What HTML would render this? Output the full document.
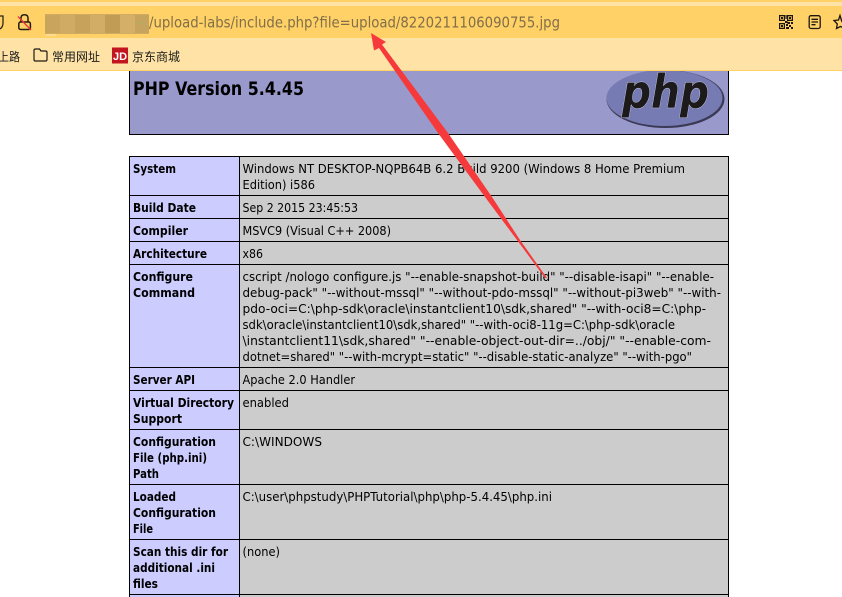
<!DOCTYPE html>
<html>
<head>
<meta charset="utf-8">
<style>
html,body{margin:0;padding:0;background:#fff;width:842px;height:597px;overflow:hidden}
svg{display:block}
.r{font-family:"DejaVu Sans","Liberation Sans",sans-serif;font-size:12px;fill:#000}
.b{font-family:"DejaVu Sans","Liberation Sans",sans-serif;font-size:12px;font-weight:bold;fill:#000}
.c{font-family:"Liberation Sans","Noto Sans CJK SC",sans-serif;font-size:12px;fill:#1a1a1a}
</style>
</head>
<body>
<svg width="842" height="597" viewBox="0 0 842 597" xmlns="http://www.w3.org/2000/svg">
<rect width="842" height="597" fill="#fff"/>
<!-- browser chrome -->
<rect width="842" height="71" fill="#ffd166"/>
<rect y="2" width="842" height="4" fill="#ffe3a6"/>
<rect y="38" width="842" height="32" fill="#ffe3a6"/>
<!-- blurred host -->
<g>
<rect x="45" y="14" width="104" height="20" fill="#d2ab62"/>
<rect x="45" y="15" width="15" height="18" fill="#c8a45c"/>
<rect x="60" y="15" width="15" height="18" fill="#cfab63"/>
<rect x="75" y="15" width="15" height="18" fill="#c6a25b"/>
<rect x="90" y="15" width="15" height="18" fill="#d1ad66"/>
<rect x="105" y="15" width="15" height="18" fill="#c19c55"/>
<rect x="120" y="15" width="15" height="18" fill="#d3af68"/>
<rect x="135" y="15" width="14" height="18" fill="#c6a45e"/>
<rect x="139" y="22" width="2" height="2" fill="#9db36a"/>
<rect x="46" y="34" width="10" height="2" fill="#ffdd8e"/>
</g>
<!-- left partial shield -->
<path d="M-2 16 H3 V23 Q3 27 0 29" fill="none" stroke="#2a2418" stroke-width="1.3"/>
<!-- lock icon -->
<g fill="none" stroke="#231c10" stroke-width="1.5">
<path d="M21 22 V18 Q21 14.8 24.500 14.800 Q28 14.800 28 18 V22"/>
<rect x="18.800" y="22" width="11.600" height="7.500" rx="1.800"/>
</g>
<path d="M18 16.500 L31 30" stroke="#f0353b" stroke-width="1.400" fill="none"/>
<text x="149" y="27.500" font-family="'DejaVu Sans','Liberation Sans',sans-serif" font-size="15" fill="#806f49" textLength="411" lengthAdjust="spacingAndGlyphs">/upload-labs/include.php?file=upload/8220211106090755.jpg</text>
<!-- right icons -->
<g fill="#1c1710">
<path fill-rule="evenodd" d="M779 15h6v6h-6zM780.200 16.200v3.600h3.600v-3.600zM787 15h6v6h-6zM788.200 16.200v3.600h3.600v-3.600zM779 23h6v6h-6zM780.200 24.200v3.600h3.600v-3.600z"/>
<rect x="781" y="17" width="2" height="2"/><rect x="789" y="17" width="2" height="2"/><rect x="781" y="25" width="2" height="2"/>
<rect x="785.500" y="15" width="1.200" height="4"/><rect x="785" y="21" width="2.500" height="2"/><rect x="787.500" y="22" width="2.500" height="2"/><rect x="791" y="22" width="2" height="2"/><rect x="786" y="24" width="2" height="2"/><rect x="789" y="25" width="2" height="2"/><rect x="791" y="27" width="2" height="2"/><rect x="786" y="27" width="3" height="2"/>
</g>
<g fill="none" stroke="#1c1710" stroke-width="1.300">
<rect x="809.200" y="15.700" width="11" height="12.800" rx="1.800"/>
<path d="M811.500 19.300h6.500M811.500 22h6.500M811.500 24.700h4"/>
<path d="M842 22 L840 15.500 L838.500 20 L834 20.500 L837.300 24 L836.500 28.500 L840.500 26.500 L844 28"/>
</g>
<!-- bookmarks -->
<text class="c" x="-2" y="61" textLength="22" lengthAdjust="spacingAndGlyphs">上路</text>
<path d="M34 50.500 Q34 49 35.500 49 H39.500 L41 51 H45.500 Q47 51 47 52.500 V59.500 Q47 61 45.500 61 H35.500 Q34 61 34 59.500 Z" fill="none" stroke="#1e1a12" stroke-width="1.200"/>
<text class="c" x="52" y="61" textLength="48" lengthAdjust="spacingAndGlyphs">常用网址</text>
<rect x="112" y="47.500" width="16" height="16" fill="#c2151f"/>
<text x="120" y="60" text-anchor="middle" font-family="'Liberation Sans',sans-serif" font-size="11" font-weight="bold" fill="#fff">JD</text>
<text class="c" x="132" y="61" textLength="48" lengthAdjust="spacingAndGlyphs">京东商城</text>
<rect y="70" width="842" height="1" fill="#ffd166"/>
<!-- PHP header -->
<rect x="129" y="71" width="600" height="64" fill="#000"/>
<rect x="130" y="71" width="598" height="63" fill="#9999cc"/>
<text x="133" y="95" font-family="'DejaVu Sans','Liberation Sans',sans-serif" font-size="19" font-weight="bold" fill="#000" textLength="171" lengthAdjust="spacingAndGlyphs">PHP Version 5.4.45</text>
<!-- logo -->
<svg x="600" y="71" width="128" height="63" viewBox="600 71 128 63">
<ellipse cx="665.500" cy="99" rx="59" ry="29" fill="#3a3a55"/>
<ellipse cx="664.500" cy="98" rx="58" ry="28" fill="#777bb4"/>
<text x="622" y="108" font-family="'DejaVu Sans',sans-serif" font-size="46" font-weight="bold" font-style="italic" fill="#1d1a1c" stroke="#d6d8ea" stroke-width="0.800" paint-order="stroke" textLength="87" lengthAdjust="spacingAndGlyphs">php</text>
</svg>
<!-- table -->
<rect x="129" y="156" width="600" height="441" fill="#000"/>
<g fill="#ccccff">
<rect x="130" y="157" width="109" height="38"/>
<rect x="130" y="196" width="109" height="22"/>
<rect x="130" y="219" width="109" height="22"/>
<rect x="130" y="242" width="109" height="22"/>
<rect x="130" y="265" width="109" height="102"/>
<rect x="130" y="368" width="109" height="22"/>
<rect x="130" y="391" width="109" height="38"/>
<rect x="130" y="430" width="109" height="54"/>
<rect x="130" y="485" width="109" height="54"/>
<rect x="130" y="540" width="109" height="54"/>
<rect x="130" y="595" width="109" height="2"/>
</g>
<g fill="#cccccc">
<rect x="240" y="157" width="488" height="38"/>
<rect x="240" y="196" width="488" height="22"/>
<rect x="240" y="219" width="488" height="22"/>
<rect x="240" y="242" width="488" height="22"/>
<rect x="240" y="265" width="488" height="102"/>
<rect x="240" y="368" width="488" height="22"/>
<rect x="240" y="391" width="488" height="38"/>
<rect x="240" y="430" width="488" height="54"/>
<rect x="240" y="485" width="488" height="54"/>
<rect x="240" y="540" width="488" height="54"/>
<rect x="240" y="595" width="488" height="2"/>
</g>
<!-- labels -->
<text class="b" x="133" y="173" textLength="43" lengthAdjust="spacingAndGlyphs">System</text>
<text class="b" x="133" y="212" textLength="63" lengthAdjust="spacingAndGlyphs">Build Date</text>
<text class="b" x="133" y="235" textLength="55" lengthAdjust="spacingAndGlyphs">Compiler</text>
<text class="b" x="133" y="258" textLength="74" lengthAdjust="spacingAndGlyphs">Architecture</text>
<text class="b" x="133" y="281" textLength="60" lengthAdjust="spacingAndGlyphs">Configure</text>
<text class="b" x="133" y="297" textLength="62" lengthAdjust="spacingAndGlyphs">Command</text>
<text class="b" x="133" y="384" textLength="62" lengthAdjust="spacingAndGlyphs">Server API</text>
<text class="b" x="133" y="407" textLength="101" lengthAdjust="spacingAndGlyphs">Virtual Directory</text>
<text class="b" x="133" y="423" textLength="49" lengthAdjust="spacingAndGlyphs">Support</text>
<text class="b" x="133" y="446" textLength="83" lengthAdjust="spacingAndGlyphs">Configuration</text>
<text class="b" x="133" y="462" textLength="74" lengthAdjust="spacingAndGlyphs">File (php.ini)</text>
<text class="b" x="133" y="478" textLength="26" lengthAdjust="spacingAndGlyphs">Path</text>
<text class="b" x="133" y="501" textLength="43" lengthAdjust="spacingAndGlyphs">Loaded</text>
<text class="b" x="133" y="517" textLength="83" lengthAdjust="spacingAndGlyphs">Configuration</text>
<text class="b" x="133" y="533" textLength="20" lengthAdjust="spacingAndGlyphs">File</text>
<text class="b" x="133" y="556" textLength="95" lengthAdjust="spacingAndGlyphs">Scan this dir for</text>
<text class="b" x="133" y="572" textLength="82" lengthAdjust="spacingAndGlyphs">additional .ini</text>
<text class="b" x="133" y="588" textLength="25" lengthAdjust="spacingAndGlyphs">files</text>
<!-- values -->
<text class="r" x="242.500" y="173" textLength="442.500" lengthAdjust="spacingAndGlyphs">Windows NT DESKTOP-NQPB64B 6.2 Build 9200 (Windows 8 Home Premium</text>
<text class="r" x="242.500" y="189" textLength="72.500" lengthAdjust="spacingAndGlyphs">Edition) i586</text>
<text class="r" x="242.500" y="212" textLength="115.500" lengthAdjust="spacingAndGlyphs">Sep 2 2015 23:45:53</text>
<text class="r" x="242.500" y="235" textLength="148.500" lengthAdjust="spacingAndGlyphs">MSVC9 (Visual C++ 2008)</text>
<text class="r" x="242.500" y="258" textLength="20.500" lengthAdjust="spacingAndGlyphs">x86</text>
<text class="r" x="242.500" y="281" textLength="471.500" lengthAdjust="spacingAndGlyphs">cscript /nologo configure.js "--enable-snapshot-build" "--disable-isapi" "--enable-</text>
<text class="r" x="242.500" y="297" textLength="478.500" lengthAdjust="spacingAndGlyphs">debug-pack" "--without-mssql" "--without-pdo-mssql" "--without-pi3web" "--with-</text>
<text class="r" x="242.500" y="313" textLength="463.500" lengthAdjust="spacingAndGlyphs">pdo-oci=C:\php-sdk\oracle\instantclient10\sdk,shared" "--with-oci8=C:\php-</text>
<text class="r" x="242.500" y="329" textLength="432.500" lengthAdjust="spacingAndGlyphs">sdk\oracle\instantclient10\sdk,shared" "--with-oci8-11g=C:\php-sdk\oracle</text>
<text class="r" x="242.500" y="345" textLength="468.500" lengthAdjust="spacingAndGlyphs">\instantclient11\sdk,shared" "--enable-object-out-dir=../obj/" "--enable-com-</text>
<text class="r" x="242.500" y="361" textLength="449.500" lengthAdjust="spacingAndGlyphs">dotnet=shared" "--with-mcrypt=static" "--disable-static-analyze" "--with-pgo"</text>
<text class="r" x="242.500" y="384" textLength="112.500" lengthAdjust="spacingAndGlyphs">Apache 2.0 Handler</text>
<text class="r" x="242.500" y="407" textLength="46.500" lengthAdjust="spacingAndGlyphs">enabled</text>
<text class="r" x="242.500" y="446" textLength="79.500" lengthAdjust="spacingAndGlyphs">C:\WINDOWS</text>
<text class="r" x="242.500" y="501" textLength="309.500" lengthAdjust="spacingAndGlyphs">C:\user\phpstudy\PHPTutorial\php\php-5.4.45\php.ini</text>
<text class="r" x="242.500" y="556" textLength="37.500" lengthAdjust="spacingAndGlyphs">(none)</text>
<!-- red arrow -->
<polygon points="371,33 386,42 382,44.500 448,133 492,197 520,240 547,278 545,278 517,240 485,197 438,133 379,48 374,50.500" fill="#f6393b"/>
</svg>
</body>
</html>
